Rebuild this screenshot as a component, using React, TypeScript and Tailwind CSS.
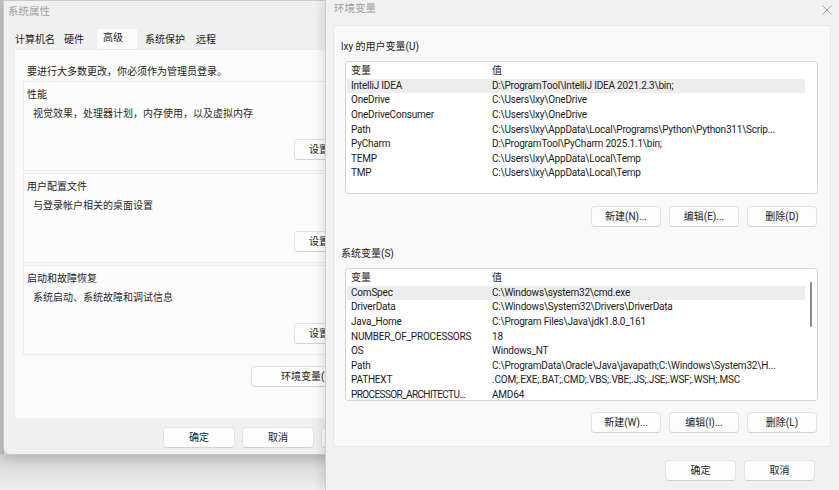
import React from "react";

const font = "font-['Segoe_UI','Roboto','Noto_Sans_CJK_SC',sans-serif]";

const userVars: [string, string][] = [
  ["IntelliJ IDEA", "D:\\ProgramTool\\IntelliJ IDEA 2021.2.3\\bin;"],
  ["OneDrive", "C:\\Users\\lxy\\OneDrive"],
  ["OneDriveConsumer", "C:\\Users\\lxy\\OneDrive"],
  ["Path", "C:\\Users\\lxy\\AppData\\Local\\Programs\\Python\\Python311\\Scrip..."],
  ["PyCharm", "D:\\ProgramTool\\PyCharm 2025.1.1\\bin;"],
  ["TEMP", "C:\\Users\\lxy\\AppData\\Local\\Temp"],
  ["TMP", "C:\\Users\\lxy\\AppData\\Local\\Temp"],
];

const sysVars: [string, string][] = [
  ["ComSpec", "C:\\Windows\\system32\\cmd.exe"],
  ["DriverData", "C:\\Windows\\System32\\Drivers\\DriverData"],
  ["Java_Home", "C:\\Program Files\\Java\\jdk1.8.0_161"],
  ["NUMBER_OF_PROCESSORS", "18"],
  ["OS", "Windows_NT"],
  ["Path", "C:\\ProgramData\\Oracle\\Java\\javapath;C:\\Windows\\System32\\H..."],
  ["PATHEXT", ".COM;.EXE;.BAT;.CMD;.VBS;.VBE;.JS;.JSE;.WSF;.WSH;.MSC"],
  ["PROCESSOR_ARCHITECTU...", "AMD64"],
];

function Btn({ children, w = "w-[71px]" }: { children: React.ReactNode; w?: string }) {
  return (
    <div className={`${w} h-[21px] shrink-0 flex items-center justify-center rounded-[4px] bg-[#fdfdfd] border border-[#e3e3e3] border-b-[#d2d2d2] text-[10px] text-[#1b1b1b]`}>
      {children}
    </div>
  );
}

function VarList({ rows, scroll }: { rows: [string, string][]; scroll?: boolean }) {
  return (
    <div className="relative w-[473px] h-[133px] bg-white border border-[#d6d6d6] rounded-[3px] pt-[2px] pl-px text-[10px] text-[#1b1b1b] leading-[14.65px]">
      <div className="flex h-[14.65px] pl-[4px]">
        <div className="w-[141px]">变量</div>
        <div>值</div>
      </div>
      {rows.map(([k, v], i) => (
        <div key={k + i} className={`flex h-[14.65px] pl-[4px] w-[458px] whitespace-nowrap tracking-[-0.2px] ${i === 0 ? "bg-[#ededed]" : ""}`}>
          <div className={`w-[141px] overflow-hidden ${k.length > 20 ? "tracking-[-0.6px]" : ""}`}>{k}</div>
          <div>{v}</div>
        </div>
      ))}
      {scroll && <div className="absolute left-[464px] top-[13px] w-[2px] h-[45px] rounded-full bg-[#8c8c8c]" />}
    </div>
  );
}

function Group({ title, desc }: { title: string; desc: string }) {
  return (
    <div className="h-[90px] mb-[2px] border border-[#ececec] bg-[#fcfcfc] pl-[3px] pt-[6px] flex flex-col">
      <div className="h-[14px] leading-[14px]">{title}</div>
      <div className="h-[14px] leading-[14px] mt-[5px] pl-[6px] text-[#2a2a2a]">{desc}</div>
      <div className="mt-[18px] flex justify-end pr-[22px]">
        <Btn w="w-[75px]">
          <span className="w-full pl-[14px]">设置(S)...</span>
        </Btn>
      </div>
    </div>
  );
}

export default function App() {
  return (
    <div className={`relative w-[839px] h-[490px] overflow-hidden bg-[#e9e9e9] ${font}`}>
      {/* desktop strip on the left */}
      <div className="absolute left-0 top-0 w-[4px] h-[490px] bg-[#c4c4c4]" />
      <div className="absolute left-0 top-[455px] w-[839px] h-[35px] bg-gradient-to-b from-[#d6d6d6] to-[#eeeeee]" />

      {/* 系统属性 window */}
      <div className="absolute left-[3px] top-0 w-[390px] h-[455px] bg-[#f0f0f0] rounded-bl-[7px] border border-[#c9c9c9] shadow-[0_4px_12px_rgba(0,0,0,0.18)] flex flex-col text-[10px] text-[#1b1b1b]">
        <div className="h-[28px] pl-[4px] pt-[3px] text-[#a0a0a0] text-[10.5px] leading-[16px]">系统属性</div>
        <div className="flex items-end h-[20px] pl-[8px] gap-0">
          <div className="px-[3px] h-[19px] leading-[19px] mr-[3px]">计算机名</div>
          <div className="px-[3px] h-[19px] leading-[19px]">硬件</div>
          <div className="ml-[10px] w-[40px] h-[20px] leading-[18px] pl-[6px] bg-[#fbfbfb]">高级</div>
          <div className="ml-[8px] h-[19px] leading-[19px]">系统保护</div>
          <div className="ml-[11px] h-[19px] leading-[19px]">远程</div>
        </div>
        <div className="ml-[10px] h-[369px] bg-[#fbfbfb] border-l border-t border-[#ebebeb] pl-[8px] pt-[15px]">
          <div className="h-[14px] leading-[14px] pl-[4px]">要进行大多数更改，你必须作为管理员登录。</div>
          <div className="h-[2px]" />
          <Group title="性能" desc="视觉效果，处理器计划，内存使用，以及虚拟内存" />
          <Group title="用户配置文件" desc="与登录帐户相关的桌面设置" />
          <Group title="启动和故障恢复" desc="系统启动、系统故障和调试信息" />
          <div className="mt-[11px] flex justify-end pr-[41px]">
            <Btn w="w-[100px]">
              <span className="w-full pl-[29px]">环境变量(N)...</span>
            </Btn>
          </div>
        </div>
        <div className="flex pl-[159px] pt-[9px] gap-[7px]">
          <Btn w="w-[72px]">确定</Btn>
          <Btn w="w-[72px]">取消</Btn>
          <Btn w="w-[72px]">应用(A)</Btn>
        </div>
      </div>

      {/* 环境变量 window */}
      <div className="absolute left-[325px] top-0 w-[514px] h-[490px] bg-[#f1f1f1] border-l border-[#cfcfcf] shadow-[-3px_0_10px_rgba(0,0,0,0.12)] flex flex-col text-[10px] text-[#1b1b1b]">
        <div className="h-[25px] flex items-start justify-between pl-[8px] pr-[7px] pt-[1px]">
          <span className="text-[#a0a0a0] text-[10.5px] leading-[16px]">环境变量</span>
          <svg width="10" height="10" viewBox="0 0 10 10" className="mt-[4px]" stroke="#a8a8a8" strokeWidth="1">
            <line x1="0.5" y1="0.5" x2="9.5" y2="9.5" />
            <line x1="9.5" y1="0.5" x2="0.5" y2="9.5" />
          </svg>
        </div>
        <div className="ml-[7px] w-[498px] h-[422px] bg-[#f8f8f8] border border-[#e6e6e6] pl-[3px] pt-[13px]">
          <div className="h-[16px] leading-[16px] pl-[4px]">lxy 的用户变量(U)</div>
          <div className="mt-[6px] pl-[8px]">
            <VarList rows={userVars} />
          </div>
          <div className="mt-[12px] flex justify-end gap-[8px] w-[480px]">
            <Btn w="w-[70px]">新建(N)...</Btn>
            <Btn w="w-[70px]">编辑(E)...</Btn>
            <Btn w="w-[70px]">删除(D)</Btn>
          </div>
          <div className="mt-[19px] h-[16px] leading-[16px] pl-[4px]">系统变量(S)</div>
          <div className="mt-[6px] pl-[8px]">
            <VarList rows={sysVars} scroll />
          </div>
          <div className="mt-[11px] flex justify-end gap-[8px] w-[480px]">
            <Btn w="w-[70px]">新建(W)...</Btn>
            <Btn w="w-[70px]">编辑(I)...</Btn>
            <Btn w="w-[70px]">删除(L)</Btn>
          </div>
        </div>
        <div className="mt-[13px] flex justify-end gap-[8px] pr-[24px]">
          <Btn w="w-[71px]">确定</Btn>
          <Btn w="w-[71px]">取消</Btn>
        </div>
      </div>
    </div>
  );
}
